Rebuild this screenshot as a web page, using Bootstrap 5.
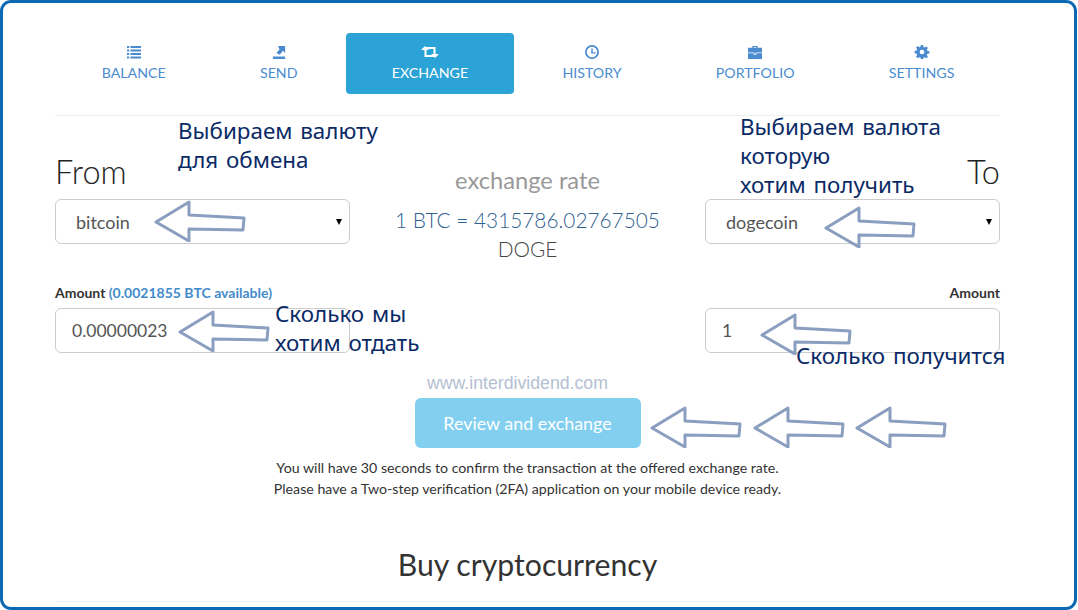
<!DOCTYPE html>
<html lang="ru">
<head>
  <meta charset="UTF-8" />
  <meta name="viewport" content="width=device-width, initial-scale=1" />
  <title>Exchange</title>
  <link href="https://cdn.jsdelivr.net/npm/bootstrap@5.3.0/dist/css/bootstrap.min.css" rel="stylesheet" />
  <style>
    html, body { height: 100%; overflow: hidden; background: #fff; }
    body { font-family: Lato, "Noto Sans", sans-serif; color: #333; }
    .frame { position: relative; height: 610px; margin-right: 1px; border: 3px solid #0b69b3; border-radius: 11px; padding: 30px 74px 0 52px; overflow: hidden; }
    .tabs { gap: 3px; margin-left: 1px; }
    .tabs .nav-link { height: 61px; padding: 12px 0 0; border-radius: 4px; font-size: 14.2px; line-height: 20px; color: #4a8ccf; }
    .tabs .nav-link.active { background: #2ba3d6; color: #fff; }
    .tabs svg { display: block; width: 20px; height: 14px; margin: 0 auto 4px; fill: currentColor; }
    .rule { margin: 21px 0 0; border: 0; border-top: 1px solid #eee; opacity: 1; }
    .swap-row { --bs-gutter-x: 30px; margin-top: 39px; }
    .side-title { font-size: 32.5px; font-weight: 300; line-height: 36px; margin: -1px 0 9px; color: #222; }
    .coin-select { height: 45px; padding: 2px 30px 0 20px; font-size: 18px; color: #555; border-color: #ccc; border-radius: 6px; background-size: 6px 6px; background-position: right 7px center; background-image: url("data:image/svg+xml,%3csvg xmlns='http://www.w3.org/2000/svg' viewBox='0 0 8 8'%3e%3cpath d='M0 0h8L4 8z'/%3e%3c/svg%3e"); }
    .rate-title { font-size: 23.7px; font-weight: 400; line-height: 30px; color: #999; margin: 10px 0 11px; }
    .rate-value { font-size: 20.8px; font-weight: 300; line-height: 28.500px; color: #444; }
    .rate-value b { font-weight: 300; color: #2f5f8f; }
    .amount-row { --bs-gutter-x: 30px; margin-top: 20px; }
    .amount-label { display: block; font-size: 14px; font-weight: 700; line-height: 20px; margin-bottom: 5px; color: #333; }
    .amount-label span { color: #428bca; }
    .amount-input { height: 45px; padding: 0 16px; font-size: 17.5px; color: #555; border-color: #ccc; border-radius: 6px; }
    .review-btn { width: 226px; height: 50px; margin-top: 45px; font-size: 17.9px; color: #fff; background: #83cff0; border: 0; border-radius: 6px; }
    .terms { margin: 9px 0 0; font-size: 14.2px; line-height: 21px; color: #333; }
    .buy-title { margin: 47px 0 0; font-size: 30.2px; line-height: 36px; font-weight: 400; color: #333; }
    .rule-end { margin-top: 19px; }
    .note { position: absolute; font-family: "Noto Sans", sans-serif; font-size: 22.4px; line-height: 29px; word-spacing: 2px; color: #0a2a66; white-space: nowrap; }
    .n1 { left: 175px; top: 113px; }
    .n2 { left: 737px; top: 109px; }
    .n3 { left: 272px; top: 296px; }
    .n4 { left: 793px; top: 338px; }
    .mark-site { position: absolute; left: 424px; top: 370px; font-family: "Liberation Sans", sans-serif; font-size: 17.7px; line-height: 20px; color: #b4c0d2; }
    .arrow { position: absolute; width: 94px; height: 42px; fill: rgba(255,255,255,.15); stroke: #8a9ebf; stroke-width: 3; stroke-linejoin: round; filter: blur(.5px); }
    .a1 { left: 150px; top: 197px; }
    .a2 { left: 174px; top: 307px; }
    .a3 { left: 820px; top: 203px; }
    .a4 { left: 756px; top: 310px; }
    .a5 { left: 646px; top: 403px; }
    .a6 { left: 749px; top: 403px; }
    .a7 { left: 851px; top: 403px; }
  </style>
</head>
<body>
  <div class="frame">
    <ul class="nav nav-pills nav-fill tabs text-uppercase">
      <li class="nav-item"><a class="nav-link" href="#">
        <svg viewBox="0 0 16 16"><path d="M0 1h2.500v2.500H0zM4 1h12v2.500H4zM0 5h2.500v2.500H0zM4 5h12v2.500H4zM0 9h2.500v2.500H0zM4 9h12v2.500H4zM0 13h2.500v2.500H0zM4 13h12v2.500H4z"/></svg>
        Balance</a></li>
      <li class="nav-item"><a class="nav-link" href="#">
        <svg viewBox="0 0 16 16"><path d="M1 13h14v3H1zM7 1h8v8l-2.500-2.500L9 11 5 9l3.500-4z"/></svg>
        Send</a></li>
      <li class="nav-item"><a class="nav-link active" href="#">
        <svg viewBox="0 0 18 14"><path d="M4 1l4 4H5.500v5H11l2 2H3.500V5H0zM14 13l-4-4h2.500V4H7L5 2h9.500v7H18z"/></svg>
        Exchange</a></li>
      <li class="nav-item"><a class="nav-link" href="#">
        <svg viewBox="0 0 16 16"><path fill-rule="evenodd" d="M8 0a8 8 0 1 1 0 16A8 8 0 0 1 8 0zm0 2a6 6 0 1 0 0 12A6 6 0 0 0 8 2zM7.200 4h1.600v4.200H12v1.500H7.200z"/></svg>
        History</a></li>
      <li class="nav-item"><a class="nav-link" href="#">
        <svg viewBox="0 0 16 16"><path d="M5 3V1h6v2h5v5.500H0V3zM6.500 3h3V2.200h-3zM0 9.500h6.500V11h3V9.500H16V16H0zM7.200 7.500h1.600v2.500H7.200z"/></svg>
        Portfolio</a></li>
      <li class="nav-item"><a class="nav-link" href="#">
        <svg viewBox="0 0 16 16"><path fill-rule="evenodd" d="M6.700 0h2.600l.4 2.300 1.300.6 2-1.300 1.800 1.800-1.300 2 .6 1.300 2.300.4v2.600l-2.300.4-.6 1.300 1.300 2-1.800 1.800-2-1.300-1.300.6-.4 2.300H6.700l-.4-2.300-1.300-.6-2 1.300-1.800-1.800 1.300-2-.6-1.300L-.4 9.300V6.700l2.300-.4.600-1.300-1.300-2 1.800-1.800 2 1.300 1.300-.6zM8 5.300a2.700 2.700 0 1 0 0 5.400 2.700 2.700 0 0 0 0-5.400z"/></svg>
        Settings</a></li>
    </ul>
    <hr class="rule" />

    <div class="row swap-row">
      <div class="col-4">
        <h2 class="side-title">From</h2>
        <select class="form-select coin-select"><option>bitcoin</option></select>
      </div>
      <div class="col-4 text-center">
        <div class="rate-title">exchange rate</div>
        <div class="rate-value"><b>1 BTC = 4315786.02767505</b> DOGE</div>
      </div>
      <div class="col-4 text-end">
        <h2 class="side-title">To</h2>
        <select class="form-select coin-select text-start"><option>dogecoin</option></select>
      </div>
    </div>

    <div class="row amount-row">
      <div class="col-4">
        <label class="amount-label">Amount <span>(0.0021855 BTC available)</span></label>
        <input class="form-control amount-input" type="text" value="0.00000023" />
      </div>
      <div class="col-4 offset-4">
        <label class="amount-label text-end">Amount</label>
        <input class="form-control amount-input" type="text" value="1" />
      </div>
    </div>

    <div class="text-center">
      <button class="btn review-btn" type="button">Review and exchange</button>
      <p class="terms">You will have 30 seconds to confirm the transaction at the offered exchange rate.<br />Please have a Two-step verification (2FA) application on your mobile device ready.</p>
      <h2 class="buy-title">Buy cryptocurrency</h2>
    </div>
    <hr class="rule rule-end" />

    <div class="note n1">Выбираем валюту<br />для обмена</div>
    <div class="note n2">Выбираем валюта<br />которую<br />хотим получить</div>
    <div class="note n3">Сколько мы<br />хотим отдать</div>
    <div class="note n4">Сколько получится</div>
    <div class="mark-site">www.interdividend.com</div>

    <svg width="0" height="0" class="d-block"><defs><path id="arrowShape" d="M3 22 L36 2 L36 15 L91 18 L90 30 L36 29 L36 41 Z"/></defs></svg>
    <svg class="arrow a1" viewBox="0 0 94 42"><use href="#arrowShape"/></svg>
    <svg class="arrow a2" viewBox="0 0 94 42"><use href="#arrowShape"/></svg>
    <svg class="arrow a3" viewBox="0 0 94 42"><use href="#arrowShape"/></svg>
    <svg class="arrow a4" viewBox="0 0 94 42"><use href="#arrowShape"/></svg>
    <svg class="arrow a5" viewBox="0 0 94 42"><use href="#arrowShape"/></svg>
    <svg class="arrow a6" viewBox="0 0 94 42"><use href="#arrowShape"/></svg>
    <svg class="arrow a7" viewBox="0 0 94 42"><use href="#arrowShape"/></svg>
  </div>
  <script src="https://cdn.jsdelivr.net/npm/bootstrap@5.3.0/dist/js/bootstrap.bundle.min.js"></script>
</body>
</html>
